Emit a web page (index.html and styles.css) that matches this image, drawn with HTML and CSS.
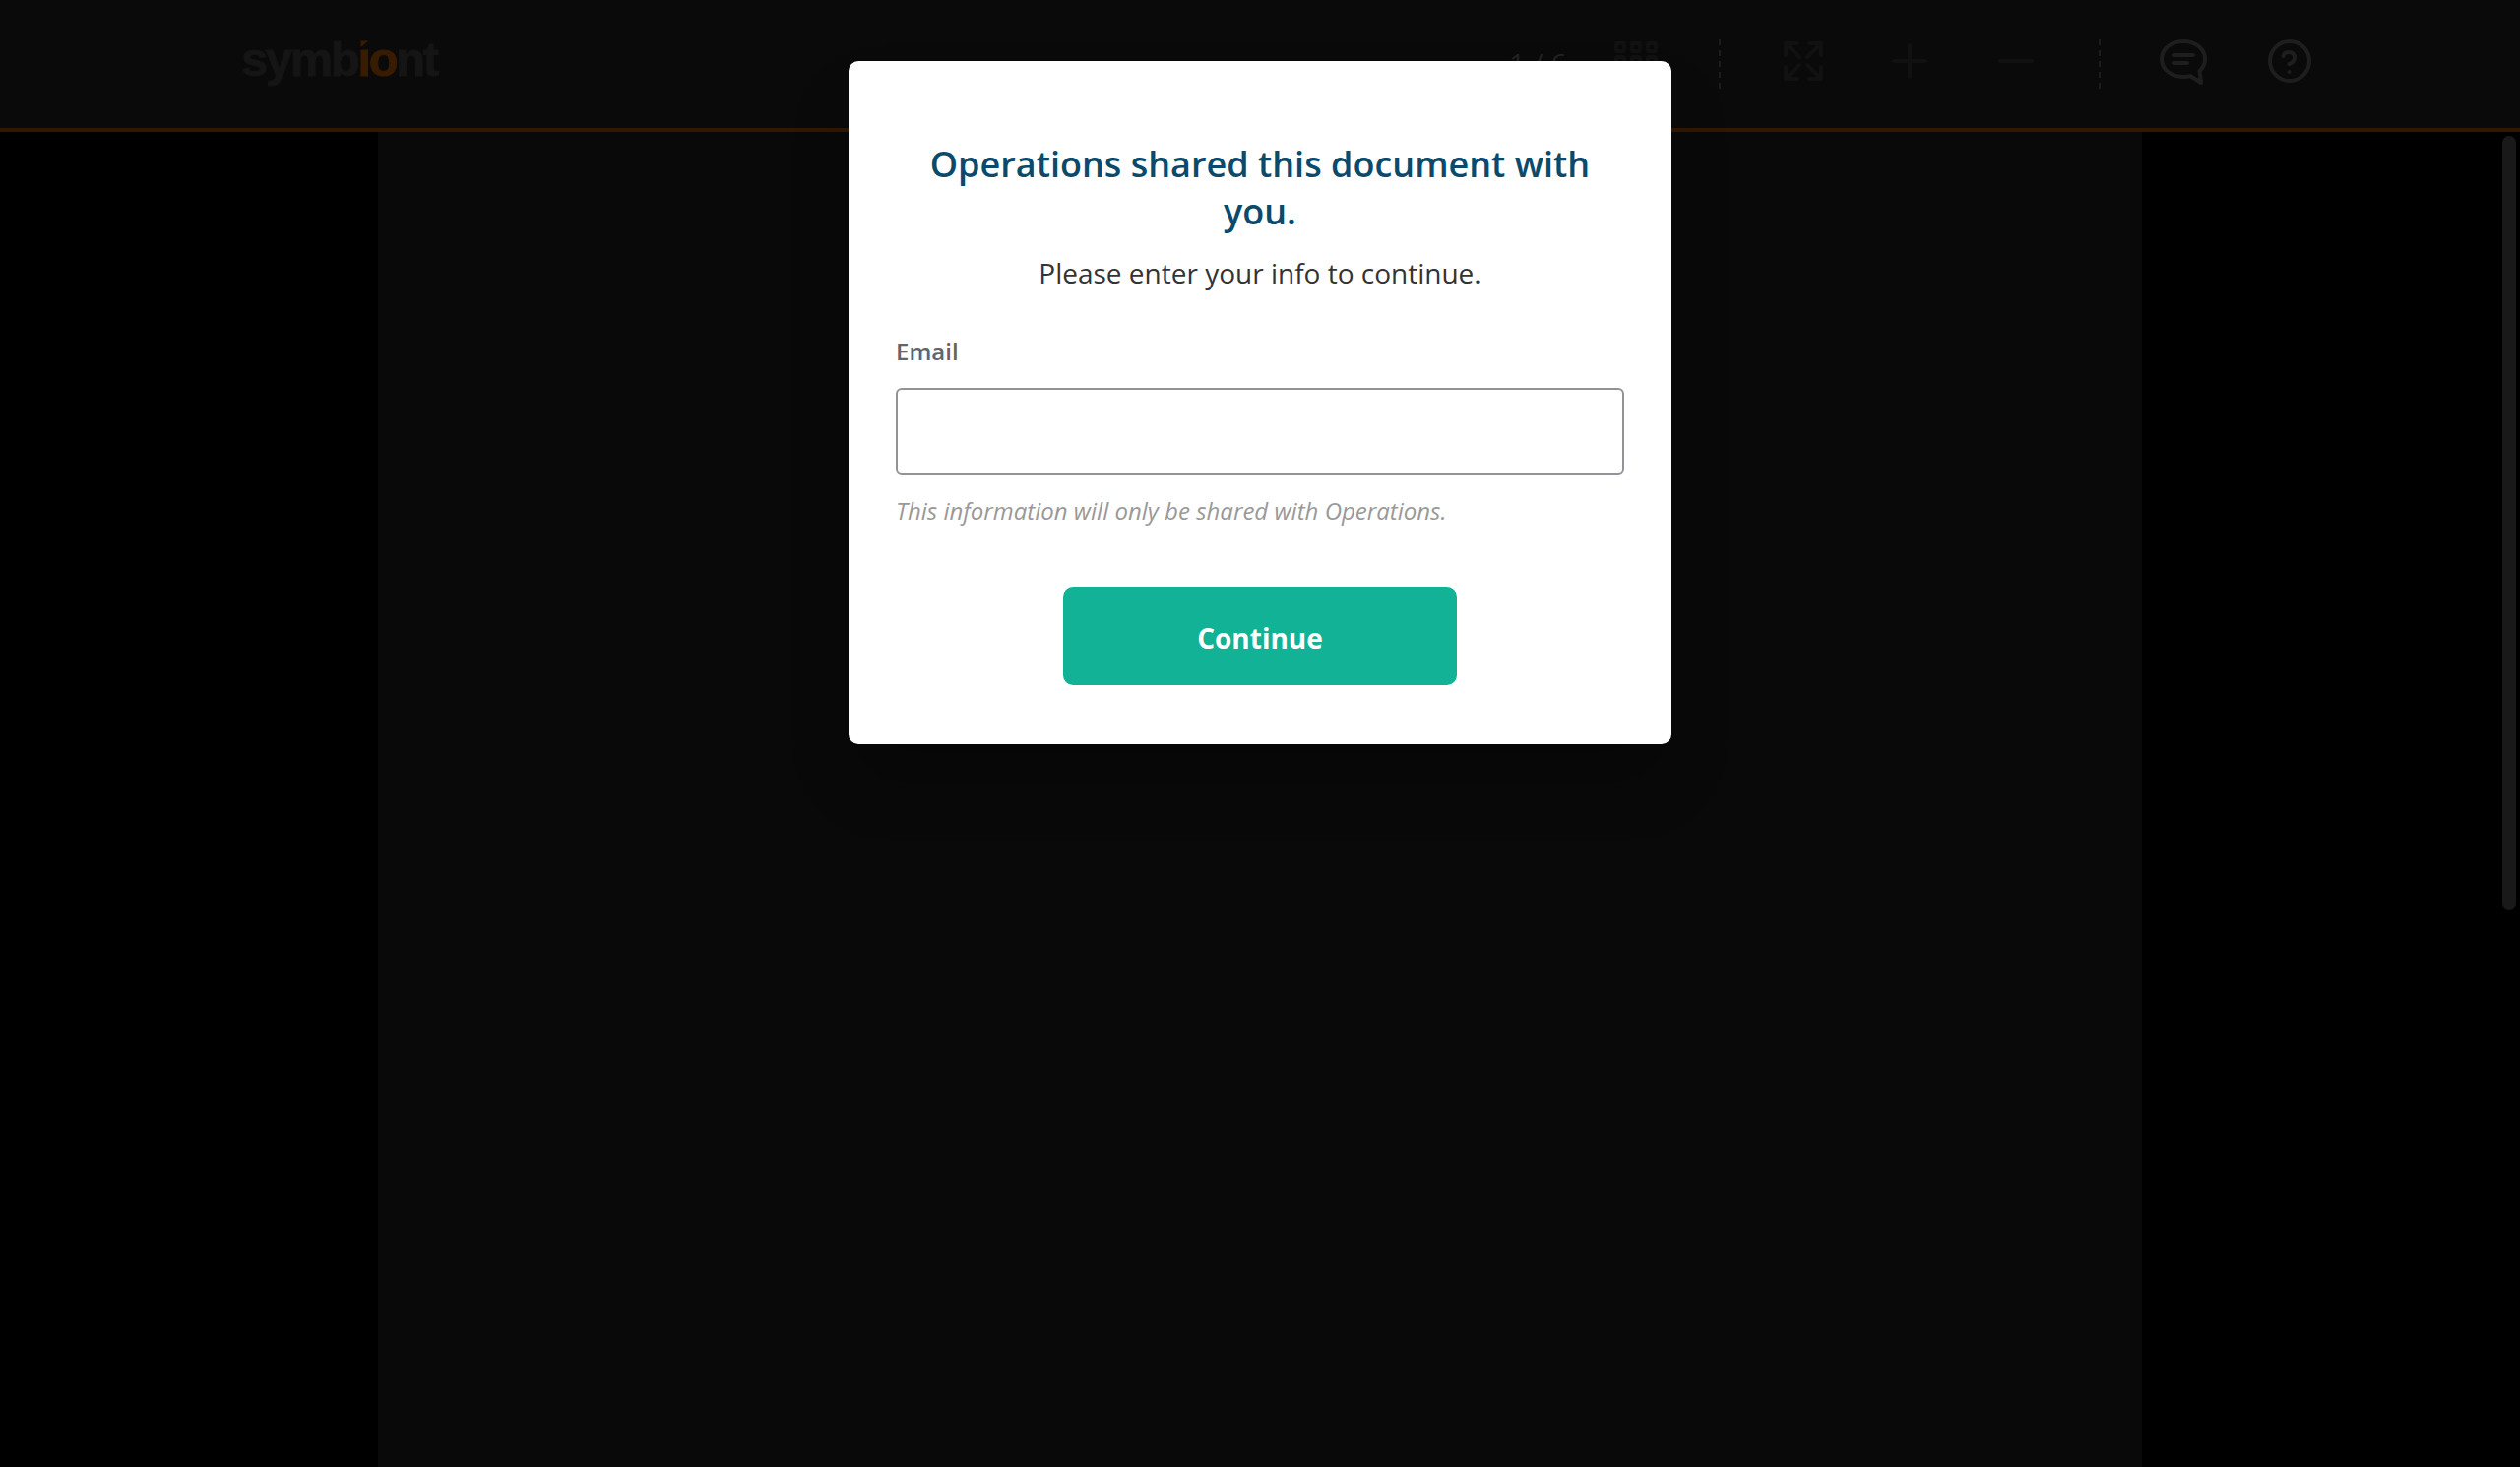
FILE: index.html
```html
<!DOCTYPE html>
<html lang="en">
<head>
  <meta charset="UTF-8" />
  <title>symbiont</title>
  <link rel="stylesheet" href="styles.css">
</head>
<body>

<!-- Toolbar -->
<header class="toolbar">
  <div class="logo">symb<span class="accent"><span class="logo-i">i</span>o</span>nt</div>
  <div class="tools">
    <span class="pages">1 / 6</span>
    <svg class="icon dim" viewBox="0 0 48 48">
      <g stroke-width="4">
        <rect x="4" y="6" width="8" height="8" rx="1" />
        <rect x="20" y="6" width="8" height="8" rx="1" />
        <rect x="36" y="6" width="8" height="8" rx="1" />
        <rect x="4" y="20" width="8" height="8" rx="1" />
        <rect x="20" y="20" width="8" height="8" rx="1" />
        <rect x="36" y="20" width="8" height="8" rx="1" />
      </g>
    </svg>
    <span class="divider"></span>
    <svg class="icon dim" viewBox="0 0 48 48">
      <path d="M18 6H6V18M6 6L20 20M30 6H42V18M42 6L28 20M18 42H6V30M6 42L20 28M30 42H42V30M42 42L28 28" />
    </svg>
    <svg class="icon dim" viewBox="0 0 48 48">
      <path d="M24 8V40M8 24H40" />
    </svg>
    <svg class="icon dim" viewBox="0 0 48 48">
      <path d="M8 24H40" />
    </svg>
    <span class="divider"></span>
    <svg class="icon" viewBox="0 0 48 48">
      <path d="M31 39C29 40 27 40 24 40C11 40 2 32 2 22C2 12 11 4 24 4C37 4 46 12 46 22C46 27 44 31 40.500 34L42 46Z" />
      <path d="M14 18H34M14 26H28" />
    </svg>
    <svg class="icon" viewBox="0 0 48 48">
      <circle cx="24" cy="24" r="20" />
      <path d="M17.500 19C18 16 20.500 15 23.500 15C27 15 29 17.500 29 20.500C29 24 26.500 26 23.500 27" />
      <circle class="dot" cx="23.500" cy="35" r="2" />
    </svg>
  </div>
</header>

<!-- Document -->
<main class="viewer">
  <div class="page"></div>
  <div class="scrollbar"></div>
</main>

<!-- Email prompt -->
<div class="overlay">
  <form class="modal">
    <h1>Operations shared this document with you.</h1>
    <p class="intro">Please enter your info to continue.</p>
    <label for="email">Email</label>
    <input type="email" id="email" name="email">
    <p class="hint">This information will only be shared with Operations.</p>
    <button type="button">Continue</button>
  </form>
</div>

</body>
</html>
```
FILE: styles.css
```css
* {
  box-sizing: border-box;
}
body {
  margin: 0;
  height: 1490px;
  overflow: hidden;
  display: flex;
  flex-direction: column;
  background-color: #000;
  font-family: "Open Sans", "Noto Sans", sans-serif;
}
.toolbar {
  display: flex;
  justify-content: space-between;
  flex: none;
  height: 134px;
  padding: 0 210px 0 245px;
  background-color: #0a0a0a;
  border-bottom: 4px solid #331800;
}
.logo {
  padding-top: 33px;
  color: #151515;
  font-family: "Liberation Sans", sans-serif;
  font-size: 49px;
  font-weight: bold;
  line-height: 54px;
  letter-spacing: -2.4px;
  -webkit-text-stroke: 1px;
}
.accent {
  color: #381c00;
}
/* cuts the dot of the i down to a triangle */
.logo-i {
  display: inline-block;
  clip-path: polygon(0 0, 100% 0, 100% 8px, 0 18px, 100% 16px, 100% 100%, 0 100%);
}
.tools {
  display: flex;
  align-items: center;
  gap: 60px;
  height: 124px;
}
.pages {
  margin-right: -14px;
  padding-top: 4px;
  color: #222;
  font-size: 28px;
  letter-spacing: 0.4px;
}
.icon {
  width: 48px;
  height: 48px;
  fill: none;
  stroke: #1e1e1e;
  stroke-width: 4;
  stroke-linecap: round;
  stroke-linejoin: round;
}
.icon.dim {
  stroke: #111;
}
.icon .dot {
  fill: #1e1e1e;
  stroke: none;
}
.divider {
  width: 2px;
  height: 50px;
  margin-top: 6px;
  background: repeating-linear-gradient(#1c1c1c 0 6px, transparent 6px 11px);
}
.viewer {
  display: flex;
  flex: 1;
  padding-left: 384px;
}
.page {
  width: 1792px;
  background-color: #090909;
}
.scrollbar {
  width: 14px;
  height: 786px;
  margin: 4px 4px 0 auto;
  border-radius: 7px;
  background-color: #191919;
}
.overlay {
  position: absolute;
  top: 0;
  left: 0;
  width: 100%;
  height: 100%;
  padding-top: 62px;
}
.modal {
  display: flex;
  flex-direction: column;
  width: 836px;
  height: 694px;
  margin: 0 auto;
  padding: 81px 48px 60px;
  border-radius: 10px;
  background-color: #fff;
  box-shadow: 0 40px 60px -10px rgba(0, 0, 0, 0.3);
}
h1 {
  margin: 0;
  padding: 0 20px;
  color: #0b4a6b;
  font-size: 36px;
  font-weight: 600;
  line-height: 48px;
  text-align: center;
}
.intro {
  margin: 19px 0 45px;
  color: #333;
  font-size: 28px;
  line-height: 38px;
  text-align: center;
}
label {
  color: #636468;
  font-size: 24px;
  font-weight: 600;
  line-height: 32px;
}
input {
  height: 88px;
  margin: 21px 0;
  padding: 0 20px;
  border: 2px solid #929297;
  border-radius: 6px;
  background-color: #fff;
  font-family: inherit;
  font-size: 28px;
}
.hint {
  margin: 0;
  color: #999;
  font-size: 24px;
  font-style: italic;
  line-height: 32px;
}
button {
  align-self: center;
  width: 400px;
  height: 100px;
  margin-top: auto;
  padding: 4px 0 0;
  border: none;
  border-radius: 10px;
  background-color: #12b296;
  color: #fff;
  font-family: inherit;
  font-size: 28px;
  font-weight: bold;
}
```
